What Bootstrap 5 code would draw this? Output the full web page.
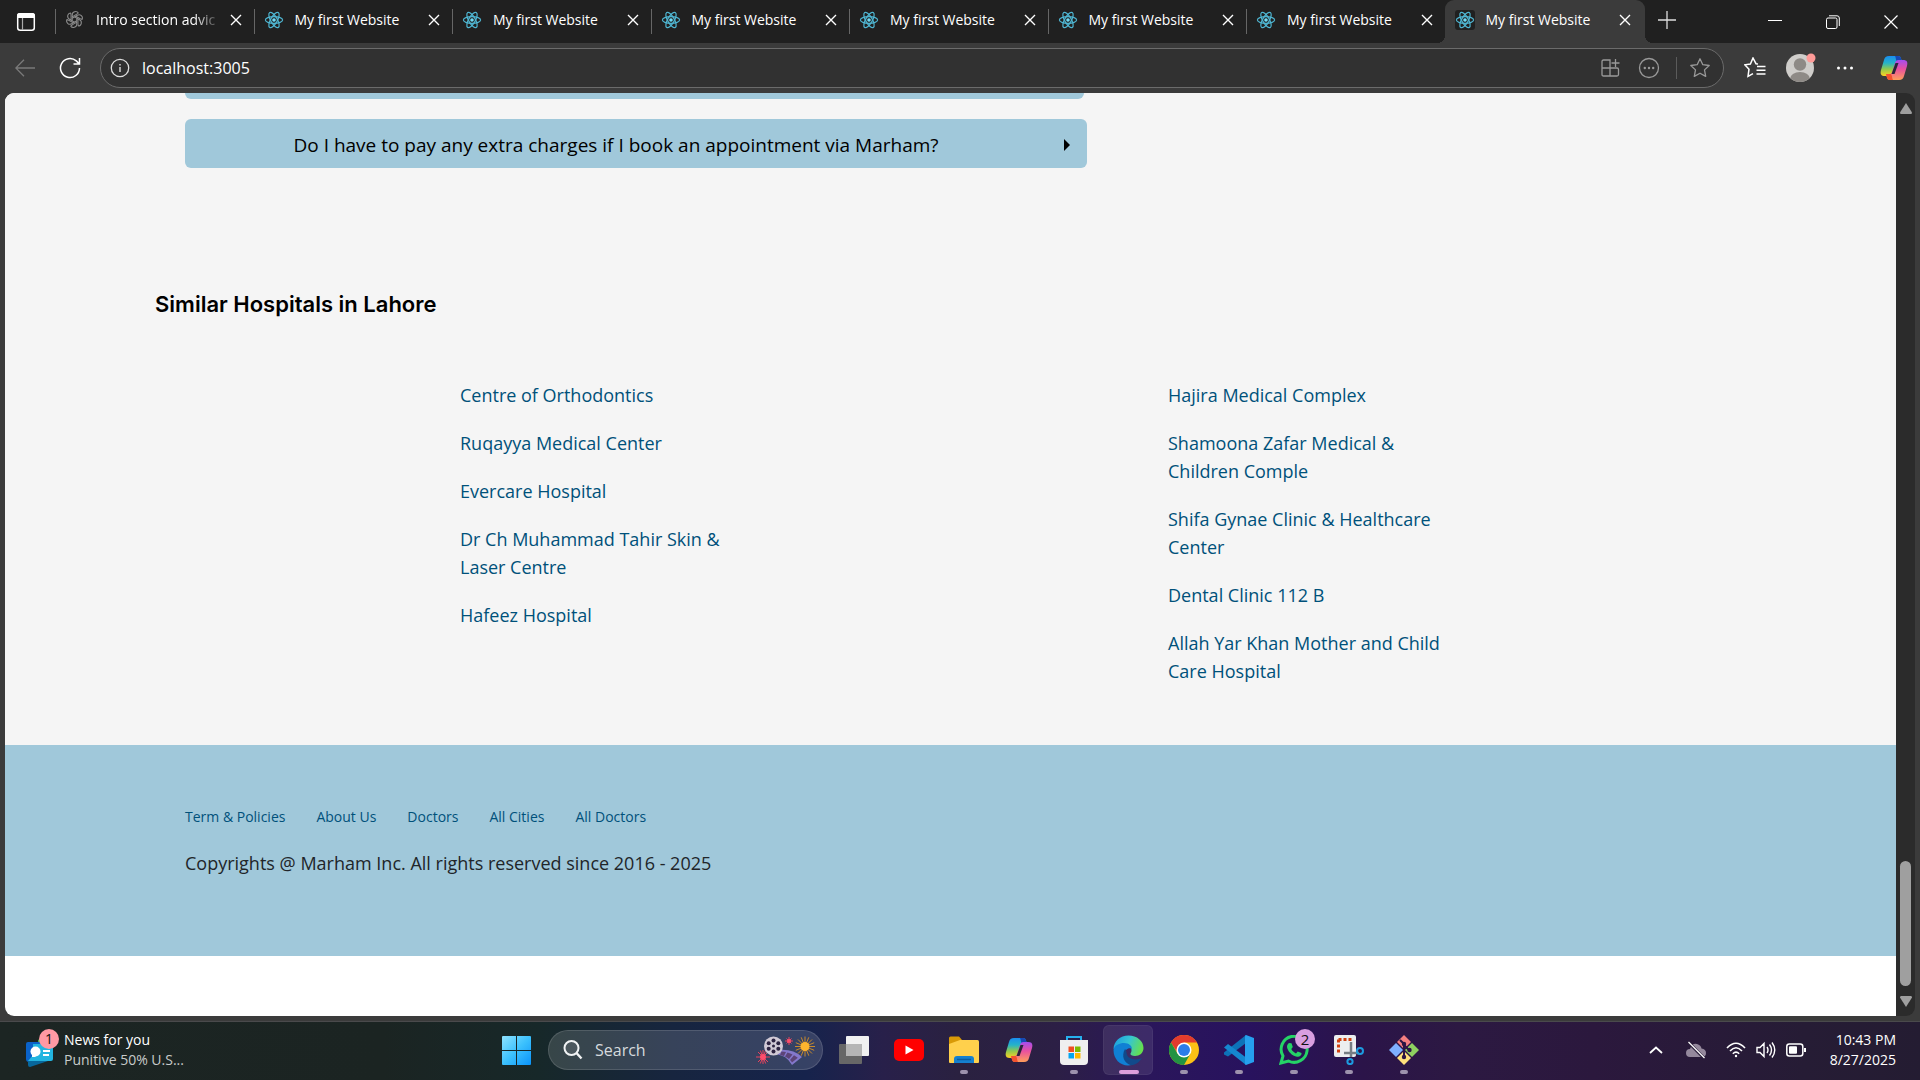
<!DOCTYPE html>
<html lang="en">
<head>
<meta charset="utf-8">
<meta name="viewport" content="width=device-width, initial-scale=1">
<title>My first Website</title>
<link href="https://cdn.jsdelivr.net/npm/bootstrap@5.3.0/dist/css/bootstrap.min.css" rel="stylesheet">
<style>
body{font-family:"Open Sans","Noto Sans",sans-serif;background:#3b3b3b;overflow:hidden}
svg{display:block;flex:none}
button{background:none;border:0;padding:0;color:inherit}
.tabstrip{background:#202020;height:43px;color:#fff;font-size:14px}
.tabmenu{width:55px}
.tab-group{flex:0 1 1590px;min-width:0}
.tab-item{flex:1 1 0;min-width:0;height:39px;padding:0 8px 0 9px;border-left:1px solid transparent;position:relative}
.tab-item::before{content:"";position:absolute;left:-1px;top:9px;height:25px;width:1px;background:#666}
.tab-item .favi{width:20px;margin-right:11px}
.tab-item a{color:#fff;text-decoration:none;flex:1;white-space:nowrap;overflow:hidden}
.tab-item .fadeout{-webkit-mask-image:linear-gradient(90deg,#000 78%,transparent);mask-image:linear-gradient(90deg,#000 78%,transparent)}
.tab-close{width:20px;margin-left:5px}
.tab-on{background:#3b3b3b;height:43px;border-radius:9px 9px 0 0;padding-right:10px;padding-bottom:4px}
.tab-on::before{left:-9px;top:auto;bottom:0;width:8px;height:8px;background:radial-gradient(circle at 0 0,transparent 8px,#3b3b3b 8px)}
.tab-on::after{content:"";position:absolute;right:-8px;bottom:0;width:8px;height:8px;background:radial-gradient(circle at 100% 0,transparent 8px,#3b3b3b 8px)}
.tab-on .favi{background:#202020;border-radius:3px}
.winctl button{width:58px;height:39px}
.toolbar{height:50px;padding-left:2px;color:#fff}
.toolbtn{width:45px}
.addr{height:40px;background:#313131;border:1px solid #6b6b6b;border-radius:20px;margin-left:8px;padding:0 12px 0 9px}
.addr input{background:none;border:0;outline:0;color:#fff;font-size:16px;padding:0 0 0 12px}
.addr button{color:#999}
.addr-rule{width:1px;height:22px;background:#5b5b5b}
.viewport-wrap{margin:0 5px 5px;border-radius:9px;overflow:hidden;background:#2b2b2b}
.scrollcol{width:19px;padding:10px 0 9px}
.thumb{width:11px;height:125px;border-radius:6px;background:#9f9f9f;margin-bottom:10px}
.site{background:#fff}
.hospital{background:#f5f5f5;height:652px}
.faq{margin-left:180px;max-width:902px}
.faq-prev{height:6px;margin-right:3px;background:#a0c8da;border-radius:0 0 6px 6px}
.faq-item{margin-top:20px;height:49px;width:100%;background:#a0c8da;border-radius:6px;padding:3px 16px 0;font-size:19px;color:#000}
.faq-item span{padding-right:32px}
.similar{margin:113px 325px 0 150px}
.similar h2{font:600 22px/46px Inter,sans-serif;color:#000;margin:0 0 54px}
.similar ul{padding-left:305px;max-width:595px}
.similar li{line-height:28px;margin-bottom:20px;font-size:18px}
.similar a,.foot a{color:#00517a;text-decoration:none}
.foot{background:#a0c8da;height:211px;padding:60px 180px 0;color:#212529}
.foot nav{gap:31px;font-size:14px;line-height:24px;margin-bottom:20px}
.foot p{font-size:18px;line-height:28px}
.taskbar{height:59px;padding-bottom:2px;border-top:1px solid #4a4a4c;color:#fff;font-size:14px;line-height:20px;background:linear-gradient(90deg,#1c2523 0,#1b2422 20%,#172829 28%,#17253f 35%,#16234c 42%,#28204a 46%,#2a2140 50%,#2c1f45 55%,#2a165b 60%,#28125e 65%,#2b1449 71%,#2c1942 76%,#2b183d 83%,#261c35 94%,#241c32 100%)}
.side{flex:1 1 0}
.news{margin-left:24px;gap:8px}
.news .sub{color:#c8cbca}
.newsicon{position:relative;width:32px;height:40px}
.pill1{position:absolute;left:15px;top:-1px;width:20px;height:20px;border-radius:50%;background:#ff99a4;color:#111;text-align:center;font-size:14px}
.searchbox{width:275px;height:40px;border-radius:20px;margin:0 3px 0 4px;padding:0 6px 0 14px;background:rgba(255,255,255,.14);border:1px solid rgba(255,255,255,.13)}
.searchbox input{background:none;border:0;outline:0;color:#dce0e3;font-size:16px;min-width:0;padding:0 0 0 12px}
.searchbox input::placeholder{color:#d5dadd;opacity:1}
.app{width:55px;height:50px;position:relative;display:flex;align-items:center;justify-content:center}
.app.run::after{content:"";position:absolute;bottom:1px;width:8px;height:4px;border-radius:2px;background:#9d92ad}
.app.here::before{content:"";position:absolute;inset:0 3px 0 2px;border-radius:6px;background:rgba(255,255,255,.09);border:1px solid rgba(255,255,255,.05)}
.app.here::after{width:20px;background:#dd9fdc}
.app svg{position:relative}
.pill2{position:absolute;left:29px;top:4px;width:20px;height:20px;border-radius:50%;background:#d99fe0;color:#111;font-size:15px}
.tray{gap:10px;margin-right:24px}
.tray-up{margin-right:12px}
.tray-cloud{margin-right:9px}
.clock{margin-left:14px;text-align:right}
</style>
<script src="https://cdn.jsdelivr.net/npm/bootstrap@5.3.0/dist/js/bootstrap.bundle.min.js"></script>
</head>
<body class="d-flex flex-column min-vh-100">
<svg width="0" height="0" class="position-absolute" aria-hidden="true">
<defs>
<linearGradient id="cpa" x1="0" y1="0" x2="0" y2="1"><stop offset="0" stop-color="#1a8df0"/><stop offset=".35" stop-color="#25b3c9"/><stop offset=".65" stop-color="#8fc94e"/><stop offset="1" stop-color="#ffd021"/></linearGradient>
<linearGradient id="cpb" x1="0" y1="0" x2="0" y2="1"><stop offset="0" stop-color="#a44df0"/><stop offset=".45" stop-color="#e850a0"/><stop offset="1" stop-color="#ff9e5a"/></linearGradient>
<symbol id="react" viewBox="0 0 20 20"><g fill="none" stroke="#4fb6d2" stroke-width="1.2"><ellipse cx="10" cy="10" rx="8.6" ry="3.3"/><ellipse cx="10" cy="10" rx="8.6" ry="3.3" transform="rotate(60 10 10)"/><ellipse cx="10" cy="10" rx="8.6" ry="3.3" transform="rotate(120 10 10)"/></g><circle cx="10" cy="10" r="1.8" fill="#6fdcf7"/></symbol>
<symbol id="gpt" viewBox="0 0 20 20"><g fill="none" stroke="#8a8a8a" stroke-width="1.1"><path id="pet" d="M7.600 11.400V5.200a3.500 3.500 0 0 1 6.500-1.900M7.600 7.200l4.800-2.800a3.500 3.500 0 0 1 1.700-1.100"/><use href="#pet" transform="rotate(60 10 10)"/><use href="#pet" transform="rotate(120 10 10)"/><use href="#pet" transform="rotate(180 10 10)"/><use href="#pet" transform="rotate(240 10 10)"/><use href="#pet" transform="rotate(300 10 10)"/></g></symbol>
<symbol id="xx" viewBox="0 0 20 20"><path d="M5 5l10 10M15 5L5 15" stroke="#fff" stroke-width="1.4"/></symbol>
<symbol id="star" viewBox="0 0 22 22"><path d="M11 1.800l2.800 5.900 6.400.8-4.700 4.400 1.200 6.500-5.700-3.200-5.700 3.200 1.200-6.500L1.800 8.500l6.400-.8z" fill="none" stroke="currentColor" stroke-width="1.3" stroke-linejoin="round"/></symbol>
<symbol id="copilot" viewBox="0 0 28 26"><path d="M9 1h9c2 0 2.600 1 3.200 3l.8 3h-3c-2 0-3 1-3.500 3L13 18c-.6 2-1.600 3-3.500 3H5c-4 0-5-2-4-6L4 5c.7-2.600 2-4 5-4z" fill="url(#cpa)"/><path d="M15 1h3c2 0 2.600 1 3.200 3l.8 3h-5c-1.300-1.600-1-4.500-2-6z" fill="#1747b5"/><path d="M19 25h-9c-2 0-2.600-1-3.200-3L6 19h3c2 0 3-1 3.500-3L15 8c.6-2 1.600-3 3.500-3H23c4 0 5 2 4 6l-3 10c-.7 2.600-2 4-5 4z" fill="url(#cpb)"/><path d="M13 25h-3c-2 0-2.600-1-3.200-3L6 19h5c1.300 1.600 1 4.500 2 6z" fill="#f3512e"/><path d="M15.500 8h3l-4 11h-3z" fill="#29253a"/></symbol>
</defs></svg>

<header>
<div class="tabstrip d-flex">
 <button class="tabmenu d-flex align-items-center justify-content-center pe-1" aria-label="Tab actions"><svg width="20" height="20" viewBox="0 0 20 20"><rect x="1.700" y="1.700" width="16.600" height="16.600" rx="2.500" fill="none" stroke="#fff" stroke-width="1.500"/><path d="M1 6V3.500Q1 1 3.500 1h13Q19 1 19 3.500V6z" fill="#fff"/><path d="M6.500 6v12" stroke="#aaa" stroke-width="1.200"/></svg></button>
 <div class="tab-group d-flex">
 <div class="tab-item d-flex align-items-center"><span class="favi"><svg width="19" height="19"><use href="#gpt"/></svg></span><a href="#" class="fadeout">Intro section advic</a><button class="tab-close" aria-label="Close tab"><svg width="20" height="20"><use href="#xx"/></svg></button></div>
 <div class="tab-item d-flex align-items-center"><span class="favi"><svg width="20" height="20"><use href="#react"/></svg></span><a href="#">My first Website</a><button class="tab-close" aria-label="Close tab"><svg width="20" height="20"><use href="#xx"/></svg></button></div>
 <div class="tab-item d-flex align-items-center"><span class="favi"><svg width="20" height="20"><use href="#react"/></svg></span><a href="#">My first Website</a><button class="tab-close" aria-label="Close tab"><svg width="20" height="20"><use href="#xx"/></svg></button></div>
 <div class="tab-item d-flex align-items-center"><span class="favi"><svg width="20" height="20"><use href="#react"/></svg></span><a href="#">My first Website</a><button class="tab-close" aria-label="Close tab"><svg width="20" height="20"><use href="#xx"/></svg></button></div>
 <div class="tab-item d-flex align-items-center"><span class="favi"><svg width="20" height="20"><use href="#react"/></svg></span><a href="#">My first Website</a><button class="tab-close" aria-label="Close tab"><svg width="20" height="20"><use href="#xx"/></svg></button></div>
 <div class="tab-item d-flex align-items-center"><span class="favi"><svg width="20" height="20"><use href="#react"/></svg></span><a href="#">My first Website</a><button class="tab-close" aria-label="Close tab"><svg width="20" height="20"><use href="#xx"/></svg></button></div>
 <div class="tab-item d-flex align-items-center"><span class="favi"><svg width="20" height="20"><use href="#react"/></svg></span><a href="#">My first Website</a><button class="tab-close" aria-label="Close tab"><svg width="20" height="20"><use href="#xx"/></svg></button></div>
 <div class="tab-item tab-on d-flex align-items-center"><span class="favi"><svg width="20" height="20"><use href="#react"/></svg></span><a href="#">My first Website</a><button class="tab-close" aria-label="Close tab"><svg width="20" height="20"><use href="#xx"/></svg></button></div>
 </div>
 <button class="px-2 ms-1 mb-1" aria-label="New tab"><svg width="20" height="20" viewBox="0 0 20 20"><path d="M10 1v18M1 10h18" stroke="#ddd" stroke-width="1.300"/></svg></button>
 <div class="winctl d-flex ms-auto">
  <button class="d-flex align-items-center justify-content-center" aria-label="Minimize"><svg width="14" height="14"><path d="M0 7.500h14" stroke="#fff"/></svg></button>
  <button class="d-flex align-items-center justify-content-center pt-1" aria-label="Restore"><svg width="14" height="14" viewBox="0 0 14 14" fill="none" stroke="#fff"><rect x=".5" y="3" width="10.500" height="10.500" rx="1.500"/><path d="M3 .8h8Q13.300.8 13.300 3v8"/></svg></button>
  <button class="d-flex align-items-center justify-content-center pt-1" aria-label="Close"><svg width="14" height="14"><path d="M.5.5l13 13M13.500.5l-13 13" stroke="#fff" stroke-width="1.200"/></svg></button>
 </div>
</div>
<div class="toolbar d-flex align-items-center">
 <button class="toolbtn d-flex justify-content-center" aria-label="Back"><svg width="20" height="18" viewBox="0 0 20 18"><path d="M20 9H1M9 .8L.8 9 9 17.200" fill="none" stroke="#7a7a7a" stroke-width="1.300"/></svg></button>
 <button class="toolbtn d-flex justify-content-center" aria-label="Refresh"><svg width="22" height="22" viewBox="0 0 22 22"><path d="M20.500 11a9.500 9.500 0 1 1-3.200-7.100l2.500 2.500M20.500 1v6h-6" fill="none" stroke="#fff" stroke-width="1.500"/></svg></button>
 <div class="addr d-flex align-items-center flex-grow-1">
  <svg width="20" height="20" viewBox="0 0 20 20"><circle cx="10" cy="10" r="8.700" fill="none" stroke="#ddd" stroke-width="1.300"/><path d="M10 9v5M10 6v1.500" stroke="#ddd" stroke-width="1.400"/></svg>
  <input class="flex-grow-1" type="text" aria-label="Address" value="localhost:3005">
  <button class="mx-2" aria-label="Apps"><svg width="22" height="20" viewBox="0 0 22 20"><path d="M2 3.500Q2 2 3.500 2H10v16H3.500Q2 18 2 16.500zM2 10h15Q18.500 10 18.500 11.500v5q0 1.500-1.500 1.500h-7M15.500 1v8M11.500 5h8" fill="none" stroke="#999" stroke-width="1.300"/></svg></button>
  <button class="mx-2" aria-label="Options"><svg width="22" height="22" viewBox="0 0 22 22"><circle cx="11" cy="11" r="9.500" fill="none" stroke="#999" stroke-width="1.300"/><g fill="#999"><circle cx="6.800" cy="11" r="1.200"/><circle cx="11" cy="11" r="1.200"/><circle cx="15.200" cy="11" r="1.200"/></g></svg></button>
  <span class="addr-rule mx-1 ms-2"></span>
  <button class="ms-2" aria-label="Favorite"><svg width="22" height="22"><use href="#star"/></svg></button>
 </div>
 <button class="toolbtn d-flex justify-content-center ms-2" aria-label="Favorites"><svg width="22" height="22" viewBox="0 0 22 22"><path d="M14 7l-2-.3L9 1 6.400 7 .8 7.800 5 12.200 4 19.300l5-2.600M13 9.500h8.500M12.500 13.200h9M12.500 17h9" fill="none" stroke="#fff" stroke-width="1.500"/></svg></button>
 <button class="toolbtn d-flex justify-content-center" aria-label="Profile"><svg width="32" height="32" viewBox="0 0 32 32"><clipPath id="av"><circle cx="16" cy="16" r="14"/></clipPath><g clip-path="url(#av)"><path d="M0 0h32v32H0z" fill="#cfcdca"/><circle cx="16" cy="12.500" r="6.200" fill="#8e8a86"/><ellipse cx="16" cy="27" rx="10" ry="7" fill="#8e8a86"/></g><circle cx="27" cy="6" r="4.500" fill="#ff9b98"/></svg></button>
 <button class="toolbtn d-flex justify-content-center" aria-label="Settings and more"><svg width="18" height="6" fill="#fff"><circle cx="2.500" cy="3" r="1.500"/><circle cx="9" cy="3" r="1.500"/><circle cx="15.500" cy="3" r="1.500"/></svg></button>
 <button class="toolbtn d-flex justify-content-center ms-1 me-1" aria-label="Copilot"><svg width="28" height="26"><use href="#copilot"/></svg></button>
</div>
</header>

<div class="viewport-wrap d-flex flex-grow-1">
<main class="site flex-grow-1">
 <div class="hospital overflow-hidden">
  <div class="faq">
   <div class="faq-prev"></div>
   <button class="faq-item d-flex align-items-center"><span class="flex-grow-1 text-center">Do I have to pay any extra charges if I book an appointment via Marham?</span><svg width="8" height="12"><path d="M1 0l6 6-6 6z"/></svg></button>
  </div>
  <section class="similar">
   <h2>Similar Hospitals in Lahore</h2>
   <div class="row gx-0">
    <div class="col-6"><ul class="list-unstyled m-0">
     <li><a href="#">Centre of Orthodontics</a></li><li><a href="#">Ruqayya Medical Center</a></li><li><a href="#">Evercare Hospital</a></li><li><a href="#">Dr Ch Muhammad Tahir Skin &amp; Laser Centre</a></li><li><a href="#">Hafeez Hospital</a></li></ul></div>
    <div class="col-6"><ul class="list-unstyled m-0">
     <li><a href="#">Hajira Medical Complex</a></li><li><a href="#">Shamoona Zafar Medical &amp; Children Comple</a></li><li><a href="#">Shifa Gynae Clinic &amp; Healthcare Center</a></li><li><a href="#">Dental Clinic 112 B</a></li><li><a href="#">Allah Yar Khan Mother and Child Care Hospital</a></li></ul></div>
   </div>
  </section>
 </div>
 <footer class="foot">
  <nav class="d-flex"><a href="#">Term &amp; Policies</a><a href="#">About Us</a><a href="#">Doctors</a><a href="#">All Cities</a><a href="#">All Doctors</a></nav>
  <p class="m-0">Copyrights @ Marham Inc. All rights reserved since 2016 - 2025</p>
 </footer>
</main>
<div class="scrollcol d-flex flex-column align-items-center">
 <svg width="12" height="11"><path d="M6 0l6 9.500q0 1.500-1 1.500H1q-1 0-1-1.500z" fill="#9f9f9f"/></svg>
 <div class="thumb mt-auto"></div>
 <svg width="12" height="11"><path d="M6 11L0 1.500Q0 0 1 0h10q1 0 1 1.500z" fill="#9f9f9f"/></svg>
</div>
</div>

<footer class="taskbar d-flex align-items-center">
 <div class="side d-flex">
  <button class="news d-flex align-items-center text-start">
   <span class="newsicon"><svg width="32" height="40" viewBox="0 0 32 40"><path d="M14 10l6-4v10h-6z" fill="#4caf50"/><path d="M2 14q0-2 2-2h16v20H5q-3 0-3-3z" fill="#0a62c9"/><path d="M4 31h20l-18 6q-2 0-2-2z" fill="#07679c"/><path d="M9 14h18q2 0 2 2v13q0 2-2 2H4l5-6z" fill="#22b5e0"/><circle cx="11.500" cy="21.500" r="5" fill="#fff"/><path d="M8 23v4h4z" fill="#fff"/><path d="M19 21h7M19 25h6" stroke="#fff" stroke-width="2"/></svg><span class="pill1">1</span></span>
   <span><span class="d-block">News for you</span><span class="d-block sub">Punitive 50% U.S...</span></span>
  </button>
 </div>
 <div class="d-flex align-items-center">
  <button class="app" aria-label="Start"><svg width="29" height="29" viewBox="0 0 29 29"><defs><linearGradient id="win" x1="0" y1="0" x2="1" y2="1"><stop offset="0" stop-color="#8fe3ff"/><stop offset=".5" stop-color="#3cc1fd"/><stop offset="1" stop-color="#0a93fa"/></linearGradient></defs><path d="M1 0h13v14H0V1q0-1 1-1zM15 0h13q1 0 1 1v13H15zM0 15h14v14H1q-1 0-1-1zM15 15h14v13q0 1-1 1H15z" fill="url(#win)"/></svg></button>
  <label class="searchbox d-flex align-items-center"><svg width="20" height="20" viewBox="0 0 20 20"><circle cx="8.500" cy="8" r="7" fill="rgba(255,255,255,.1)" stroke="#f1f3f4" stroke-width="2"/><path d="M13.500 13l5 5.500" stroke="#f1f3f4" stroke-width="2.400"/></svg>
   <input class="flex-grow-1" type="text" placeholder="Search" aria-label="Search">
   <svg width="62" height="32" viewBox="0 0 62 32"><g stroke="#e8425e" stroke-width="1"><path d="M9 16v14M2 23h14M4 18l10 10M14 18L4 28M6.300 16.500l5.400 13M11.700 16.500l-5.400 13"/><path d="M35 3v8M31 7h8M32.500 4.500l5 5M37.500 4.500l-5 5"/></g><circle cx="9" cy="23" r="3" fill="#ff4d6b"/><circle cx="35" cy="7" r="2" fill="#ff4d6b"/><path d="M19 20Q32 20 38 31L48 23Q39 14.500 24 16z" fill="#8478cc"/><path d="M27.500 17.500q2.500 0 4.500.6l-2 4q-2-.7-4-1zM33.500 18.500q3 .8 5 2l-3.500 4.500q-1.500-1.500-4-2.500zM40 21.200q2 1 3.800 2.500L38 28.500q-1-1.600-2-2.500z" fill="#5d4478"/><circle cx="19.500" cy="12" r="9.500" fill="#d0c9d5"/><g fill="#2d2442"><circle cx="19.500" cy="12" r="1.500"/><circle cx="19.500" cy="6.500" r="2"/><circle cx="24.300" cy="9.300" r="2"/><circle cx="24.300" cy="14.700" r="2"/><circle cx="19.500" cy="17.500" r="2"/><circle cx="14.700" cy="14.700" r="2"/><circle cx="14.700" cy="9.300" r="2"/></g><g transform="translate(0 1.500)"><path d="M51 1v20M41 11h20M44 4l14 14M58 4L44 18M47.200 1.800l7.600 18.400M54.800 1.800l-7.600 18.400M41.800 7.200l18.400 7.600M41.800 14.800l18.400-7.600" stroke="#c98a2c"/><circle cx="51" cy="11" r="4.500" fill="#ffb52e"/></g></svg></label>
  <button class="app" aria-label="Task view"><svg width="30" height="28" viewBox="0 0 30 28"><rect x="0" y="8" width="23" height="20" rx="1" fill="#676767"/><rect x="7" y="0" width="23" height="20" rx="1" fill="#f1f1f1"/><path d="M7 8h16v12H7z" fill="#b5b5b5"/></svg></button>
  <button class="app" aria-label="YouTube"><svg width="30" height="22"><rect width="30" height="22" rx="5" fill="#f00"/><path d="M11.500 6.500l8 4.500-8 4.500z" fill="#fff"/></svg></button>
  <button class="app run" aria-label="File Explorer"><svg width="30" height="28" viewBox="0 0 30 28"><path d="M0 2q0-1.500 1.500-1.500H10L13 4v6H0z" fill="#d99a07"/><path d="M0 8l11-4h17.500Q30 4 30 5.500V26q0 1-1 1H1q-1 0-1-1z" fill="#ffd04c"/><path d="M5 27v-4q0-3 3-3h14q3 0 3 3v4z" fill="#1580cf"/><path d="M8 23.500h14" stroke="#0b5ca0" stroke-width="1.500"/></svg></button>
  <button class="app" aria-label="Copilot"><svg width="28" height="26"><use href="#copilot"/></svg></button>
  <button class="app run" aria-label="Microsoft Store"><svg width="30" height="30" viewBox="0 0 30 30"><path d="M8 6V2h14v4" fill="none" stroke="#26b0ee" stroke-width="2"/><path d="M1 5h28v21q0 4-4 4H5q-4 0-4-4z" fill="#efefef"/><path d="M9.500 11.500h5.500V17H9.500z" fill="#f04f23"/><path d="M16 11.500h5.500V17H16z" fill="#7fbb00"/><path d="M9.500 18H15v5.500H9.500z" fill="#05a6f0"/><path d="M16 18h5.500v5.500H16z" fill="#ffb902"/></svg></button>
  <button class="app run here" aria-label="Microsoft Edge"><svg width="31" height="31" viewBox="0 0 31 31"><defs><linearGradient id="eg" x1="0" y1=".2" x2="1" y2=".5"><stop offset="0" stop-color="#1b9ddf"/><stop offset=".5" stop-color="#36c5d2"/><stop offset="1" stop-color="#66e04c"/></linearGradient></defs><path d="M.5 14C1 6 7 .5 15.500.5 24 .5 30.500 6 30.500 13c0 5-4 8-8.500 8-3 0-5-1-4.500-2.500C20 15 18 10 12 10 6 10 1 14 .5 14z" fill="url(#eg)"/><path d="M.5 15c1-5 6-7 10.500-7 5 0 8 3 8 6-3-2-8 1-7 6 1 5 6 8 10 8-2 1.500-4 2.500-7 2.500C7 30.500.5 24 .5 15z" fill="#1080d4"/><path d="M12 14c-4 7-1 14 6 16.300 5-.5 8.500-3.300 10.800-7.300-6 3-14 1-15-4-.5-2-.3-4-1.800-5z" fill="#114a8b"/></svg></button>
  <button class="app run" aria-label="Chrome"><svg width="30" height="30" viewBox="0 0 30 30"><circle cx="15" cy="15" r="15" fill="#fbc116"/><path d="M2 7.500A15 15 0 0 1 28 7.500H15L9 18.500z" fill="#e33b2e"/><path d="M2 7.500A15 15 0 0 0 15 30l6.500-11.500-13 0z" fill="#229342"/><circle cx="15" cy="15" r="7.500" fill="#fff"/><circle cx="15" cy="15" r="6" fill="#2b7de9"/></svg></button>
  <button class="app run" aria-label="VS Code"><svg width="30" height="30" viewBox="0 0 30 30"><path d="M22 0v8L4 21.500 0 19.500v-2z" fill="#0d72b8"/><path d="M0 12.500l4-3.500 18 13.500V30z" fill="#1587cf"/><path d="M22 0l8 3v24l-8 3q-1 0-1-2V2q0-2 1-2z" fill="#26a0ee"/></svg></button>
  <button class="app run" aria-label="WhatsApp"><svg width="30" height="30" viewBox="0 0 30 30"><path d="M2 28l2-7A13 13 0 1 1 9.500 26z" fill="none" stroke="#25d366" stroke-width="3"/><path d="M10 8l2.500.3 1.300 3.700-1.500 2c1 2 2.500 3.500 4.700 4.400l1.700-2 3.800 1.700c.3 2.800-2.500 4-4.500 3.700C13 21 8.500 16 8 12c0-2 .7-3 2-4z" fill="#25d366"/></svg><span class="pill2">2</span></button>
  <button class="app run" aria-label="Snipping Tool"><svg width="30" height="30" viewBox="0 0 30 30"><rect width="22" height="22" rx="2" fill="#eceef0"/><path d="M4.500 4.500h13M4.500 4.500v13" stroke="#d1400f" stroke-width="3" stroke-dasharray="3 2"/><path d="M17 7v15M10 18h15" stroke="#777e84" stroke-width="2.500"/><circle cx="26" cy="16" r="3" fill="none" stroke="#1d9bdf" stroke-width="2"/><circle cx="16" cy="26.500" r="2.600" fill="none" stroke="#1d9bdf" stroke-width="2"/></svg></button>
  <button class="app run" aria-label="Git"><svg width="30" height="30" viewBox="0 0 30 30"><path d="M15 0l7 7-7 7-7-7z" fill="#f47f80"/><path d="M23 8l7 7-7 7-7-7z" fill="#8ed160"/><path d="M7 8l7 7-7 7-7-7z" fill="#7fb0ff"/><path d="M15 16l7 7-7 7-7-7z" fill="#ffe07c"/><path d="M11 5l4 4v13M15 10l5 5" stroke="#2b1545" stroke-width="2" fill="none"/><g fill="#2b1545"><circle cx="15" cy="9" r="2.200"/><circle cx="20.500" cy="15" r="2.200"/><circle cx="15" cy="22" r="2.200"/></g></svg></button>
 </div>
 <div class="side d-flex justify-content-end">
  <div class="tray d-flex align-items-center">
   <button class="tray-up" aria-label="Hidden icons"><svg width="14" height="8"><path d="M1 7l6-5.500L13 7" fill="none" stroke="#fff" stroke-width="1.800"/></svg></button>
   <svg class="tray-cloud" width="22" height="18" viewBox="0 0 22 18"><path d="M5 16q-4 0-4-4t4-4Q7 2 12 3q4 1 4.500 4.500Q21 8 21 12t-4 4z" fill="#94889c"/><path d="M3 1l16 16" stroke="#281b38" stroke-width="3"/><path d="M3.500 1l16 16" stroke="#fff" stroke-width="1.300"/></svg>
   <svg width="20" height="16" viewBox="0 0 20 16" fill="none" stroke="#fff" stroke-width="1.600"><path d="M1 6q9-9.500 18 0M4 9q6-6.500 12 0M6.800 11.700q3.200-3.200 6.400 0"/><circle cx="10" cy="14" r="1.200" fill="#fff" stroke="none"/></svg>
   <svg width="20" height="18" viewBox="0 0 20 18" fill="none" stroke="#fff" stroke-width="1.400"><path d="M1 6.500h3l4-4v13l-4-4H1zM11 6q2 3 0 6M13.500 3.500q4 5.500 0 11M16 1.500q5.500 7.500 0 15"/></svg>
   <svg width="20" height="14" viewBox="0 0 20 14"><rect x=".8" y="1" width="16" height="12" rx="2.500" fill="none" stroke="#fff" stroke-width="1.500"/><rect x="3" y="3.200" width="8" height="7.600" rx="1" fill="#fff"/><path d="M18 5h2v4h-2z" fill="#fff"/></svg>
   <div class="clock"><div>10:43 PM</div><div>8/27/2025</div></div>
  </div>
 </div>
</footer>
</body>
</html>
